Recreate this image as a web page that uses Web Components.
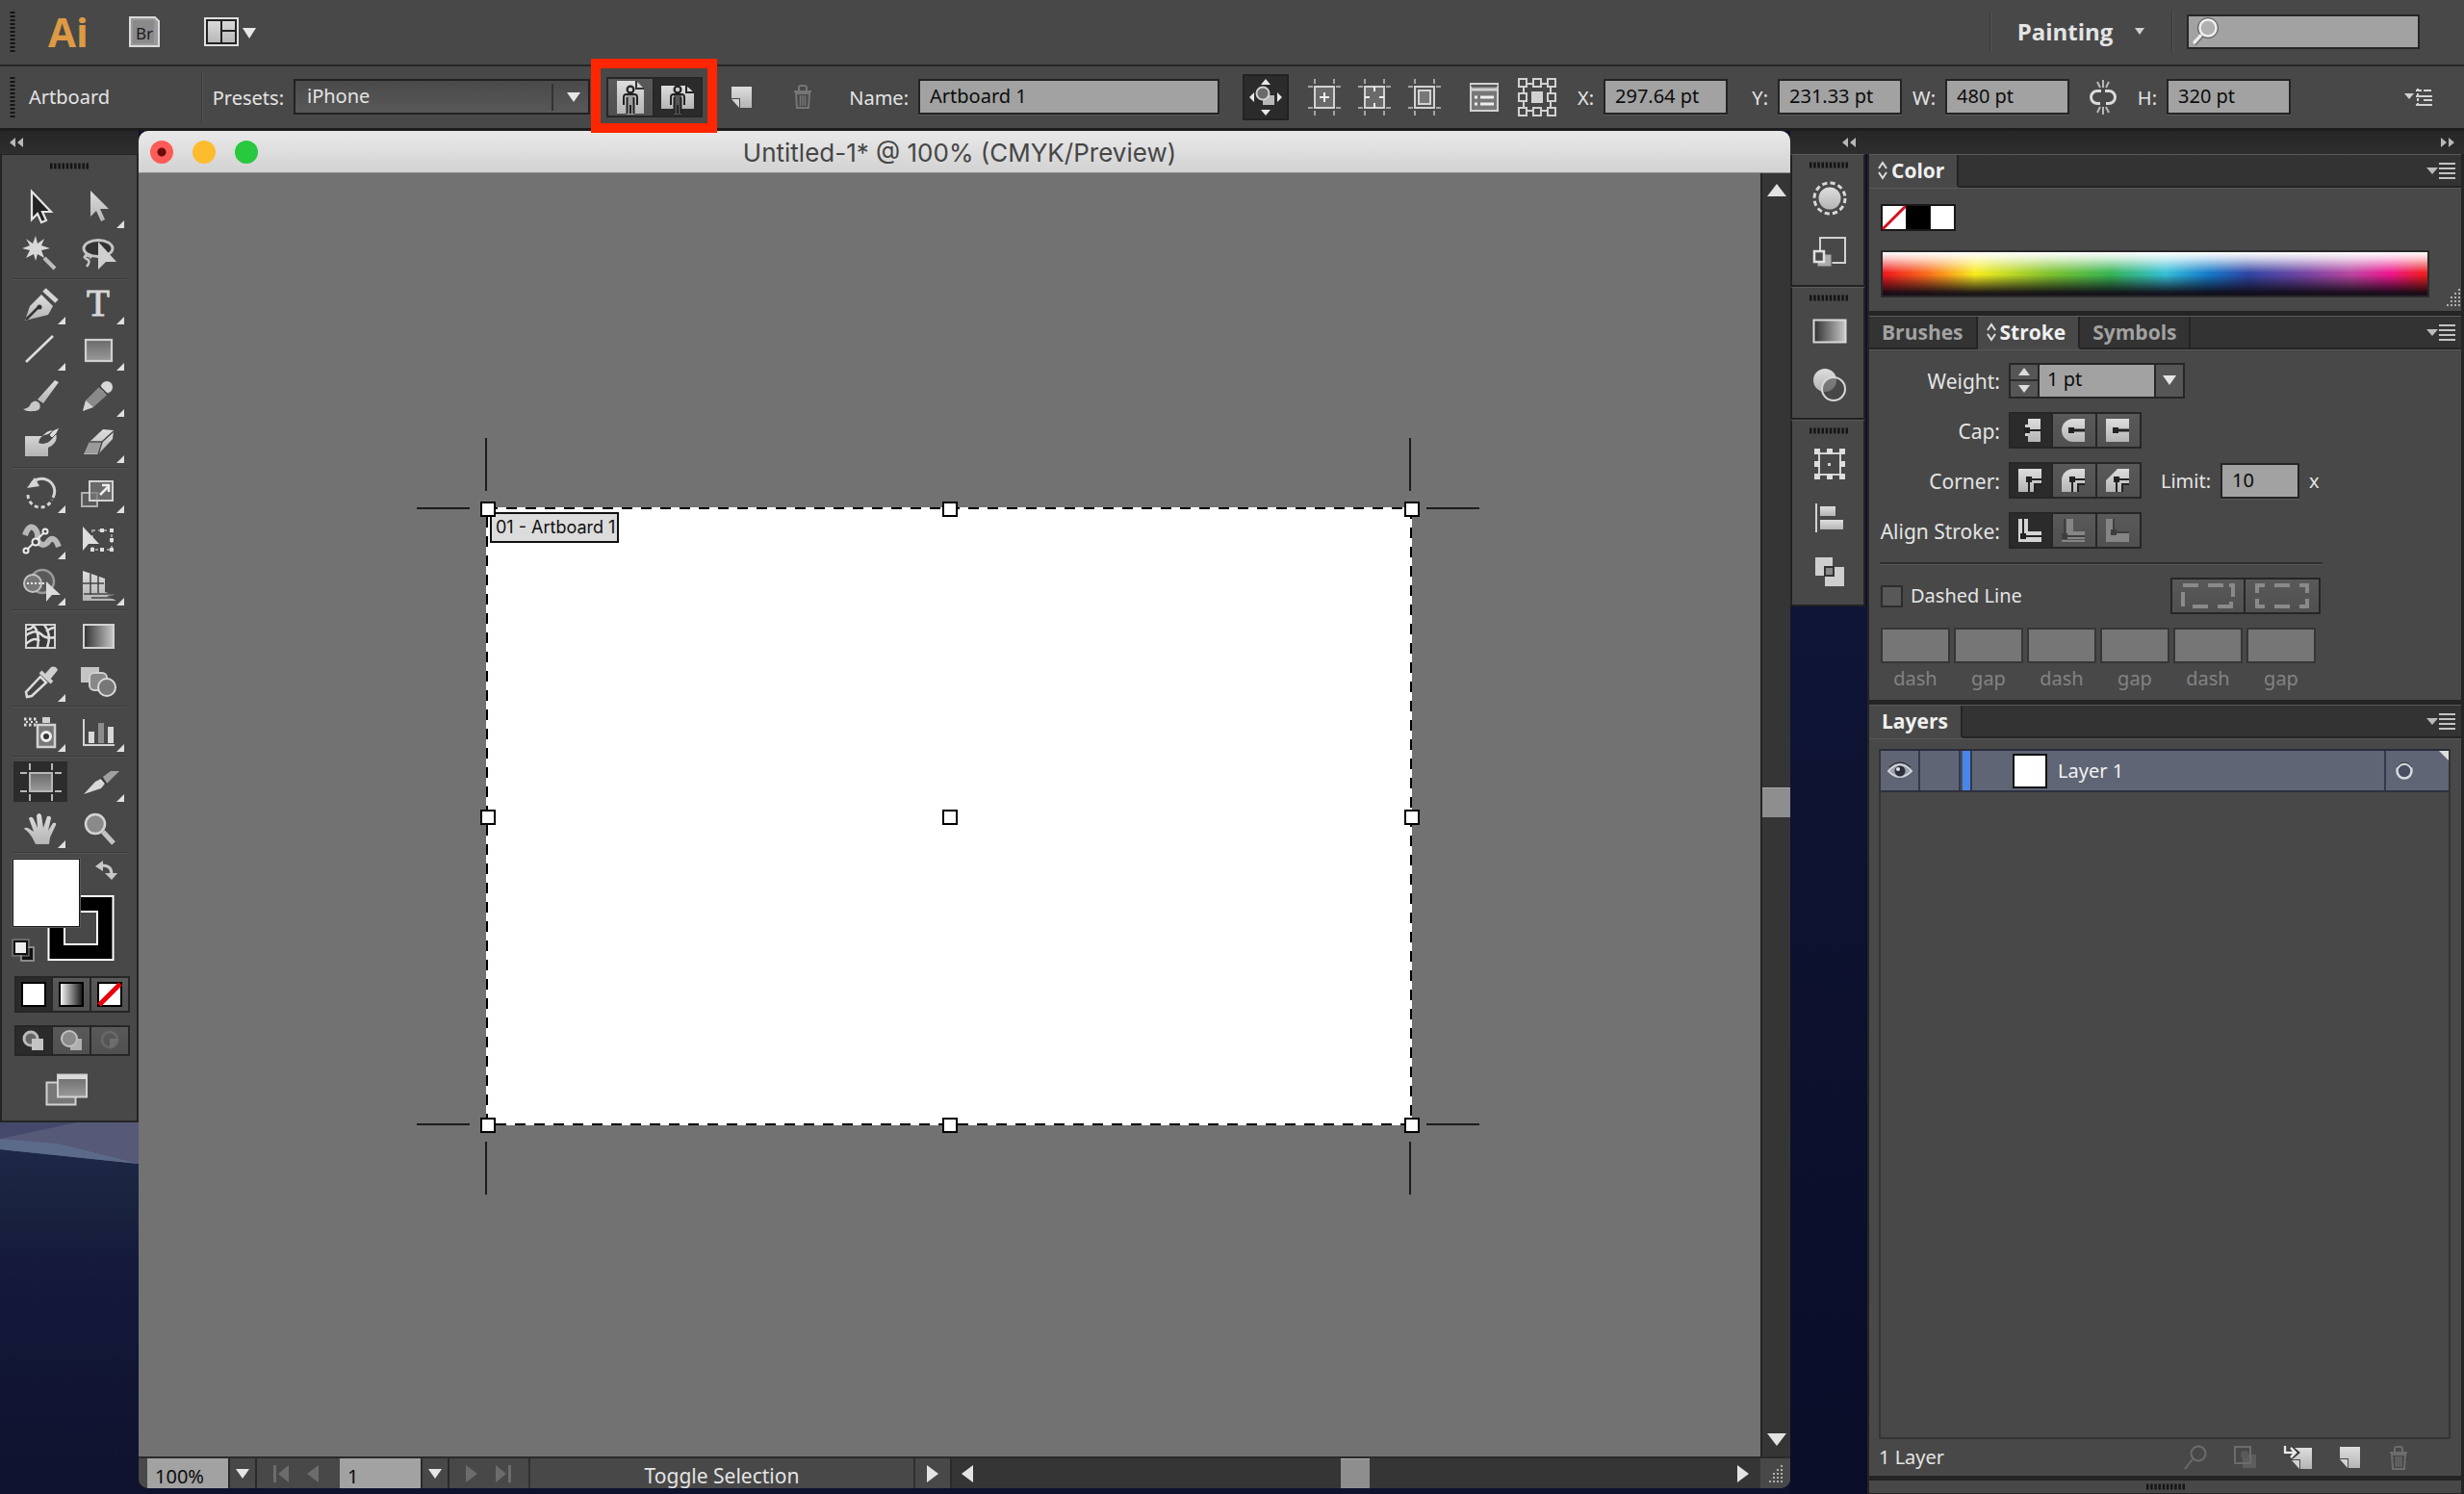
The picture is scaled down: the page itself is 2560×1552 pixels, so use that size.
<!DOCTYPE html>
<html lang="en">
<head>
<meta charset="utf-8">
<title>Untitled-1* @ 100% (CMYK/Preview)</title>
<style>
html,body{margin:0;height:100%;background:#0e122c}
body{font-family:"Noto Sans","Open Sans",sans-serif;font-size:20px;line-height:28px;color:#e4e4e4;overflow:hidden}
</style>
</head>
<body>
<ai-app></ai-app>
<script>
const BASE = `*{box-sizing:border-box}
button,input,select{font:inherit;color:inherit;margin:0;padding:0;border:0;border-radius:0;background:none;outline:0}
button{display:flex;align-items:center;justify-content:center}
svg{display:block}`;

function define(name, css, html) {
  customElements.define(name, class extends HTMLElement {
    connectedCallback() {
      if (this.shadowRoot) return;
      const root = this.attachShadow({ mode: 'open' });
      const t = document.createElement('template');
      t.innerHTML = `<style>${BASE}${css}</style>` + (typeof html === 'function' ? html(this) : html);
      root.append(t.content.cloneNode(true));
    }
  });
}

const L = '#d2d2d2';
const DEFS = `<defs>
<linearGradient id="g" x1="0" y1="0" x2="0" y2="1"><stop offset="0" stop-color="#dedede"/><stop offset="1" stop-color="#b4b4b4"/></linearGradient>
<linearGradient id="d" x1="0" y1="0" x2="0" y2="1"><stop offset="0" stop-color="#6a6a6a"/><stop offset="1" stop-color="#9a9a9a"/></linearGradient>
<linearGradient id="h" x1="0" y1="0" x2="1" y2="0"><stop offset="0" stop-color="#303030"/><stop offset="1" stop-color="#c8c8c8"/></linearGradient>
<linearGradient id="w" x1="0" y1="0" x2="1" y2="0"><stop offset="0" stop-color="#fff"/><stop offset="1" stop-color="#111"/></linearGradient></defs>`;

const person = (x, y, c) => `<g transform="translate(${x} ${y})"><path d="M5 11h8v20H5z" fill="${c}"/><path d="M2 21v-8q0-3 3-3h8q3 0 3 3v8M5.500 13v17M12.500 13v17M9 21v9" fill="none" stroke="#222" stroke-width="2"/><circle cx="9" cy="5" r="3.400" fill="#ccc" stroke="#222" stroke-width="2.200"/></g>`;
const marks = `<path d="M0 8h5M29 8h5M0 30h5M29 30h5M7 0v5M27 0v5M7 33v5M27 33v5" stroke="#a4a4a4" stroke-width="2"/>`;
const trash = `<path d="M3 7h18M8 6V3q0-2 2-2h4q2 0 2 2v3" fill="none" stroke="currentColor" stroke-width="2"/><path d="M5 9h14l-1 15H6z" fill="none" stroke="currentColor" stroke-width="2"/><path d="M9.500 11v11M12 11v11M14.500 11v11" stroke="currentColor" stroke-width="1.500"/>`;
const newpage = `<path d="M0 0h21v22H9V12H0z" fill="url(#g)"/><path d="M0 13l8 9V13z" fill="${L}"/>`;

const ICONS = {
  bridge: [32, 32, `<path d="M1 1h26l4 4v26H1z" fill="#9a9a9a" stroke="#dadada" stroke-width="2"/><path d="M4 4h22v24H4z" fill="#8a8a8a"/><text x="16" y="24" text-anchor="middle" font-family="Noto Sans" font-size="17" fill="#1c1c1c">Br</text>`],
  arrange: [54, 32, `<rect x="1" y="2" width="34" height="28" fill="url(#g)" stroke="#e0e0e0" stroke-width="2"/><path d="M3 4h30v24H3zM18 4v24M18 15h15" fill="none" stroke="#222" stroke-width="2"/><path d="M40 12h14l-7 11z" fill="#e8e8e8"/>`],
  down: [14, 10, `<path d="M0 0h14L7 10z" fill="#e6e6e6"/>`],
  downS: [12, 8, `<path d="M1 0h10L6 7z" fill="#d0d0d0"/>`],
  up: [20, 13, `<path d="M0 13h20L10 0z" fill="#e2e2e2"/>`],
  downL: [20, 14, `<path d="M0 0h20L10 13z" fill="#e2e2e2"/>`],
  right: [12, 18, `<path d="M0 0v18L12 9z" fill="currentColor"/>`],
  left: [12, 18, `<path d="M12 0v18L0 9z" fill="currentColor"/>`],
  first: [18, 18, `<path d="M0 0h3v18H0zM16 0v18L5 9z" fill="currentColor"/>`],
  last: [18, 18, `<path d="M15 0h3v18h-3zM2 0v18l11-9z" fill="currentColor"/>`],
  stepUp: [12, 8, `<path d="M0 8h12L6 0z" fill="#dcdcdc"/>`],
  stepDown: [12, 8, `<path d="M0 0h12L6 8z" fill="#dcdcdc"/>`],
  collapse: [14, 10, `<path d="M6 0v10L0 5zM14 0v10L8 5z" fill="#b8b8b8"/>`],
  expand: [14, 10, `<path d="M0 0v10l6-5zM8 0v10l6-5z" fill="#b8b8b8"/>`],
  search: [28, 30, `<circle cx="17" cy="11" r="8.500" fill="#b0b0b0" stroke="#eee" stroke-width="2.500"/><circle cx="17" cy="11" r="10.500" fill="none" stroke="#555"/><path d="M10 18L2 27" stroke="#eee" stroke-width="3"/><path d="M12 20L4 29" stroke="#555"/>`],
  portrait: [32, 40, `<path d="M2 3h20l8 8v26H2z" fill="url(#g)"/><path d="M22 3v8h8" fill="none" stroke="#333" stroke-width="2"/>` + person(7, 7, '#9c9c9c')],
  landscape: [36, 38, `<path d="M1 7h26l8 7v17H1z" fill="url(#g)"/><path d="M27 7v7h8" fill="none" stroke="#222" stroke-width="2"/>` + person(9, 6, '#555')],
  newpage: [22, 22, newpage],
  trash: [24, 25, trash],
  move: [34, 38, `<path d="M17 0l5 6H12zM17 38l5-6H12zM0 19l5-5v10zM34 19l-5-5v10z" fill="#e8e8e8"/><rect x="14" y="17" width="12" height="10" fill="#b8b8b8"/><circle cx="14" cy="15" r="6.500" fill="#6a6a6a" stroke="${L}" stroke-width="2"/>`],
  abCenter: [34, 38, marks + `<rect x="7" y="8" width="20" height="22" fill="#6a6a6a" stroke="${L}" stroke-width="2"/><path d="M17 14v10M12 19h10" stroke="#eee" stroke-width="2"/>`],
  abCross: [34, 38, marks + `<rect x="7" y="8" width="20" height="22" fill="#6a6a6a" stroke="${L}" stroke-width="2"/><path d="M17 8v5M17 25v5M7 19h5M22 19h5" stroke="#eee" stroke-width="2"/>`],
  abSafe: [34, 38, marks + `<rect x="7" y="8" width="20" height="22" fill="#555" stroke="${L}" stroke-width="2"/><rect x="11" y="12" width="12" height="14" fill="#777" stroke="${L}" stroke-width="2"/>`],
  options: [30, 30, `<rect x="1" y="1" width="28" height="28" fill="#777" stroke="${L}" stroke-width="2"/><path d="M1 3h28" stroke="#333" stroke-width="1"/><path d="M1 7h28" stroke="${L}" stroke-width="3"/><path d="M5 15h3M5 22h3M11 15h14M11 22h14" stroke="#eee" stroke-width="3"/>`],
  refpoint: [40, 40, `<path d="M6 6h28v28H6z" fill="none" stroke="${L}" stroke-width="2"/>` + [5, 20, 35].map(y => [5, 20, 35].map(x => x == 20 && y == 20 ? `<rect x="14" y="14" width="12" height="12" fill="${L}"/>` : `<rect x="${x - 4}" y="${y - 4}" width="8" height="8" fill="#484848" stroke="${L}" stroke-width="2"/>`).join('')).join('')],
  link: [30, 36, `<path d="M13 11.500H9a6.500 6.500 0 000 13h3M17 11.500h4a6.500 6.500 0 010 13h-3" fill="none" stroke="#dadada" stroke-width="3"/><path d="M15 0v8M9 2l3 6M21 2l-3 6M15 36v-8M9 34l3-6M21 34l-3-6" stroke="#b8b8b8" stroke-width="2"/>`],
  ctlMenu: [30, 20, `<path d="M0 6h10l-5 6z" fill="${L}"/><path d="M14 1v18" stroke="${L}" stroke-width="2" stroke-dasharray="3 2"/><path d="M12 3h6M20 3h8M12 9h17M20 13h9M12 18h17" stroke="${L}" stroke-width="2"/>`],
  menu: [30, 18, `<path d="M0 6h12l-6 7z" fill="#bbb"/><path d="M13 2h17M13 7h17M13 12h17M13 17h17" stroke="#c4c4c4" stroke-width="2"/>`],
  sort: [12, 20, `<path d="M2 8l4-6 4 6M2 12l4 6 4-6" fill="none" stroke="#ddd" stroke-width="2"/>`],
  grip: [40, 7, `<path d="M0 3.500h40" stroke="#151515" stroke-width="6" stroke-dasharray="2.500 1.667"/>`],
  vgrip: [6, 42, `<path d="M3 0v42" stroke="#151515" stroke-width="5" stroke-dasharray="2 2"/>`],
  sizer: [16, 20, `<path d="M14 1v2M14 5v2M10 5v2M14 9v2M10 9v2M6 9v2M14 13v2M10 13v2M6 13v2M2 17v2M6 17v2M10 17v2M14 17v2" stroke="#b0b0b0" stroke-width="2"/>`],
  appearance: [36, 36, `<circle cx="18" cy="18" r="16" fill="none" stroke="#d8d8d8" stroke-width="3" stroke-dasharray="5.200 3.180"/><circle cx="18" cy="18" r="11.500" fill="url(#g)"/>`],
  graphicStyles: [36, 34, `<rect x="8" y="2" width="26" height="26" fill="#484848" stroke="${L}" stroke-width="2"/><rect x="5" y="19" width="15" height="13" fill="#aaa" stroke="#484848"/><rect x="2" y="16" width="10" height="11" fill="#484848" stroke="#e0e0e0" stroke-width="2.500"/>`],
  gradientP: [36, 26, `<rect x="1.500" y="1.500" width="33" height="23" fill="url(#h)" stroke="#dadada" stroke-width="2"/>`],
  transparency: [36, 36, `<circle cx="13" cy="13" r="12" fill="url(#g)"/><circle cx="22" cy="22" r="12" fill="#484848" fill-opacity=".6" stroke="#d8d8d8" stroke-width="2"/>`],
  transformP: [34, 34, `<rect x="6" y="6" width="22" height="22" fill="none" stroke="${L}" stroke-width="2"/><rect x="15" y="16" width="3" height="3" fill="${L}"/>` + [4, 17, 30].map(y => [4, 17, 30].map(x => x == 17 && y == 17 ? '' : `<rect x="${x - 3}" y="${y - 3}" width="6" height="6" fill="#dedede"/>`).join('')).join('')],
  alignP: [30, 30, `<path d="M1 0v30" stroke="${L}" stroke-width="2"/><rect x="5" y="3" width="16" height="10" fill="url(#g)"/><rect x="5" y="17" width="24" height="10" fill="url(#g)"/>`],
  pathfinder: [32, 32, `<rect x="1" y="1" width="18" height="19" fill="#cfcfcf"/><rect x="11" y="11" width="20" height="20" fill="#cfcfcf"/><rect x="11" y="11" width="9" height="9" fill="#888" stroke="#333" stroke-width="2"/>`],
  capButt: [30, 26, `<path d="M12 1h13v24H12z" fill="url(#g)"/><path d="M26 13H10" stroke="#222" stroke-width="2"/><path d="M9 7h3v12H9z" fill="${L}"/><path d="M8 10h6v6H8z" fill="#222"/>`],
  capRound: [30, 26, `<path d="M26 1H14a12 12 0 000 24h12z" fill="url(#g)"/><path d="M26 13H13" stroke="#222" stroke-width="3"/><path d="M9 10h6v6H9z" fill="#222"/>`],
  capSquare: [30, 26, `<path d="M2 1h24v24H2z" fill="url(#g)"/><path d="M26 13H13" stroke="#222" stroke-width="3"/><path d="M9 10h6v6H9z" fill="#222"/>`],
  joinMiter: [30, 26, `<path d="M2 1h24v16h-6v8H2z" fill="url(#g)"/><path d="M26 12H13v13M26 17h-7v8" fill="none" stroke="#222" stroke-width="2"/><path d="M10 9h6v6h-6z" fill="#222"/>`],
  joinRound: [30, 26, `<path d="M26 1H14A12 12 0 002 13v12h18v-8h6z" fill="url(#g)"/><path d="M26 12H13v13M26 17h-7v8" fill="none" stroke="#222" stroke-width="2"/><path d="M10 9h6v6h-6z" fill="#222"/>`],
  joinBevel: [30, 26, `<path d="M26 1H14L2 13v12h18v-8h6z" fill="url(#g)"/><path d="M26 12H13v13M26 17h-7v8" fill="none" stroke="#222" stroke-width="2"/><path d="M10 9h6v6h-6z" fill="#222"/>`],
  alCenter: [30, 26, `<path d="M2 1h10v13h14v11H2z" fill="#d4d4d4"/><path d="M7 1v18h19" fill="none" stroke="#222" stroke-width="2"/><path d="M4 16h6v6H4z" fill="#222"/>`],
  alInside: [30, 26, `<path d="M7 1h7v13h12v8H7z" fill="#858585"/><path d="M5 1v18h21" fill="none" stroke="#3e3e3e" stroke-width="2"/><path d="M2 16h6v6H2z" fill="#3e3e3e"/><path d="M2 23h24v2H2z" fill="#858585"/>`],
  alOutside: [30, 26, `<path d="M2 1h8v15h16v9H2z" fill="#858585"/><path d="M10 1v14h16" fill="none" stroke="#3e3e3e" stroke-width="2"/><path d="M7 12h6v6H7z" fill="#3e3e3e"/>`],
  dashKeep: [56, 28, `<path d="M2 3h16M28 3h16M50 3h4v12M2 10v15M12 25h16M38 25h14v-5" fill="none" stroke="#8a8a8a" stroke-width="4"/>`],
  dashFit: [56, 28, `<path d="M2 11V3h8M20 3h16M46 3h8v8M2 17v8h8M20 25h16M46 25h8v-8" fill="none" stroke="#8a8a8a" stroke-width="4"/>`],
  eye: [26, 22, `<path d="M1 11Q13-3 25 11Q13 23 1 11z" fill="#9aa0ac" stroke="#cfd2da" stroke-width="2"/><circle cx="13" cy="11" r="5.500" fill="#2b2f3a"/><circle cx="11" cy="9" r="2" fill="#dfe3ea"/><path d="M2 7Q13-3 24 7" fill="none" stroke="#222" stroke-width="1"/>`],
  target: [20, 22, `<circle cx="10" cy="11" r="7.500" fill="#4a5060" stroke="#d8dbe2" stroke-width="2.500"/><path d="M2 7Q10-3 18 7" fill="none" stroke="#333" stroke-width="1"/>`],
  find: [26, 26, `<circle cx="16" cy="9" r="7.500" fill="none" stroke="currentColor" stroke-width="2"/><path d="M10 15L2 25" stroke="currentColor" stroke-width="2"/>`],
  mask: [24, 24, `<path d="M1 1h16v17H1z" fill="none" stroke="currentColor" stroke-width="2"/><path d="M9 9h14v14H9z" fill="currentColor" fill-opacity=".6"/><circle cx="11" cy="9" r="4" fill="#5a5a5a"/>`],
  sublayer: [32, 24, `<g transform="translate(9 2)">${newpage}</g><path d="M1 0v7h9M8 2l6 5-6 5" fill="none" stroke="#333" stroke-width="5"/><path d="M2 0v7h9M8 2l5 5-5 5" fill="none" stroke="#e8e8e8" stroke-width="2.500"/>`],
  screen: [44, 34, `<rect x="1.500" y="9.500" width="30" height="23" fill="#777" stroke="${L}" stroke-width="2"/><rect x="13" y="1.500" width="30" height="23" fill="url(#d)" stroke="${L}" stroke-width="2"/><path d="M13 4h30" stroke="#dadada" stroke-width="4"/>`],
  fillWhite: [26, 26, `<rect x="1" y="1" width="24" height="24" fill="#fff" stroke="#000" stroke-width="2"/>`],
  fillGrad: [26, 26, `<rect x="1" y="1" width="24" height="24" fill="url(#w)" stroke="#000" stroke-width="2"/>`],
  fillNone: [26, 26, `<rect x="1" y="1" width="24" height="24" fill="#fff" stroke="#000" stroke-width="2"/><path d="M2 24L24 2" stroke="#e8000b" stroke-width="5"/>`],
  drawNormal: [24, 22, `<circle cx="9" cy="9" r="7" fill="#666" stroke="#bbb" stroke-width="3"/><rect x="10" y="9" width="12" height="12" fill="#c4c4c4"/>`],
  drawBehind: [24, 22, `<rect x="11" y="9" width="12" height="12" fill="#b0b0b0"/><circle cx="10" cy="9" r="8" fill="#8a8a8a" stroke="#c0c0c0" stroke-width="2"/>`],
  drawInside: [24, 22, `<circle cx="12" cy="10" r="8" fill="none" stroke="#666" stroke-width="3"/><path d="M12 9h9l-6 9h-3z" fill="#6e6e6e"/>`],
  swatches: [78, 28, `<rect width="78" height="28" fill="#181818"/><rect x="2" y="2" width="24" height="24" fill="#fff"/><path d="M2 26L26 2" stroke="#d2101f" stroke-width="3"/><rect x="26" y="2" width="25" height="24" fill="#000"/><rect x="52" y="2" width="24" height="24" fill="#fff"/>`],
};

const TOOLS = {
  selection: [0, `<path d="M21 7v29l6-6 4 9 5-2-4-9h9z" fill="#222" stroke="#e4e4e4" stroke-width="2.200"/>`],
  direct: [1, `<path d="M21 6v27l6-6 5 11 4-2-5-11h9z" fill="url(#g)"/>`],
  wand: [0, `<path d="M25 5l2 8 7-5-3 7 9 3-9 2 3 8-7-4-2 7-2-7-8 4 4-8-8-2 8-3-4-7 7 5z" fill="#d8d8d8"/><path d="M34 28l11 11" stroke="#bdbdbd" stroke-width="4"/>`],
  lasso: [0, `<ellipse cx="29" cy="18" rx="15" ry="8.500" fill="#333" stroke="#c4c4c4" stroke-width="3"/><path d="M17 24q-4 4 0 5q5 2 0 8M14 28q3-5 8 0" fill="none" stroke="#c4c4c4" stroke-width="2.500"/><path d="M29 11v29l8-8h11z" fill="#cfcfcf"/>`],
  pen: [1, `<path d="M14 41l5-15 12-12 12 12-5 9z" fill="url(#g)"/><path d="M15 40l13-13" stroke="#333" stroke-width="2.500"/><circle cx="29" cy="27" r="2.500" fill="#333"/><path d="M34 9l13 12" stroke="#d4d4d4" stroke-width="5"/>`],
  type: [1, `<text x="29" y="36" text-anchor="middle" font-family="Liberation Serif" font-size="39" fill="#d8d8d8" stroke="#d8d8d8">T</text>`],
  line: [1, `<path d="M15 36L43 9" stroke="#dedede" stroke-width="2.500"/>`],
  rect: [1, `<rect x="16" y="13" width="27" height="22" fill="url(#d)" stroke="#d0d0d0" stroke-width="2.200"/>`],
  brush: [0, `<path d="M12 37q7-1 8-6 5-5 9 0 3 8-7 8-6 1-10-2z" fill="#c8c8c8"/><path d="M27 27L45 7l4 2-16 22z" fill="url(#g)"/>`],
  pencil: [1, `<path d="M13 39l3-11L35 9l9 8-20 18z" fill="#8a8a8a"/><path d="M13 39l3-11 8 7z" fill="#d4d4d4"/><circle cx="38" cy="14" r="6" fill="#d8d8d8"/><path d="M30 13l9 9" stroke="#333" stroke-width="1.500"/>`],
  blob: [0, `<path d="M14 17h18q6-7 12-6l-6 4q-9 1-10 9 8 3 14-4l4-6q3 10-8 15v9H14z" fill="url(#g)"/><path d="M39 16l4-5 7-3-3 6-5 5z" fill="#dedede" stroke="#444"/>`],
  eraser: [1, `<path d="M14 36l6-13 14-13 11 1-1 9-15 16z" fill="url(#g)"/><path d="M20 23h13l-4 13M33 23l12-11" fill="none" stroke="#444" stroke-width="1.500"/><path d="M15 35l5-11h12l-4 11z" fill="#9a9a9a"/>`],
  rotate: [1, `<path d="M20 16a13 13 0 0123 13" fill="none" stroke="#d4d4d4" stroke-width="3"/><path d="M16 19l8-11 5 9z" fill="#d4d4d4"/><path d="M17 26a13 13 0 0025 5" fill="none" stroke="#d4d4d4" stroke-width="3" stroke-dasharray="4 3"/>`],
  scale: [1, `<rect x="12" y="24" width="16" height="14" fill="#5a5a5a" stroke="#b0b0b0" stroke-width="2"/><rect x="20" y="12" width="24" height="20" fill="#777" fill-opacity=".7" stroke="${L}" stroke-width="2"/><path d="M31 26l8-8M33 16h7v7" fill="none" stroke="#eee" stroke-width="2.500"/>`],
  warp: [1, `<path d="M14 20q4-12 10-7 4 4 3 12 4 8 10 3 7-10 12 4" fill="none" stroke="#b8b8b8" stroke-width="6"/><path d="M15 36L35 16" stroke="#e8e8e8" stroke-width="2"/><g fill="#444" stroke="#eee" stroke-width="2"><circle cx="15" cy="36" r="2.500"/><circle cx="35" cy="16" r="2.500"/><circle cx="25" cy="27" r="3.500"/></g>`],
  free: [0, `<rect x="23" y="15" width="20" height="20" fill="none" stroke="#9a9a9a" stroke-width="2" stroke-dasharray="3 3"/><g fill="#dedede"><path d="M31 13h4v4h-4zM41 13h4v4h-4zM41 23h4v4h-4zM41 33h4v4h-4zM31 33h4v4h-4zM21 33h4v4h-4z"/><path d="M13 11v25l6-7h11z"/></g>`],
  builder: [1, `<circle cx="32" cy="20" r="12" fill="#5a5a5a" stroke="#9a9a9a" stroke-width="2.500"/><circle cx="22" cy="22" r="9" fill="#777" stroke="#c4c4c4" stroke-width="2"/><path d="M16 22h20" stroke="#eee" stroke-width="2" stroke-dasharray="2 2"/><path d="M36 20v21l6-7h9z" fill="#dcdcdc"/>`],
  perspective: [1, `<path d="M13 9l23 8v14l10 3-8 1 10 5H13z" fill="url(#g)"/><path d="M21 12v22M29 14v18M13 22h22M14 33h30M22 37h26" stroke="#444" stroke-width="1.500"/>`],
  mesh: [0, `<rect x="15" y="13" width="30" height="24" fill="#3a3a3a" stroke="${L}" stroke-width="2"/><path d="M15 24q10-7 16-1 5 5 14 3M22 13q8 8 5 24M34 13q8 10 3 24M15 33q9-8 14-3M15 18q5 0 8-4M36 20q5-4 9-4" fill="none" stroke="#dedede" stroke-width="2.500"/>`],
  gradient: [0, `<rect x="14" y="13" width="31" height="24" fill="url(#h)" stroke="${L}" stroke-width="2"/>`],
  dropper: [1, `<path d="M16 40l-1-5 15-16 6 6-15 14z" fill="#444" stroke="#dcdcdc" stroke-width="2.500"/><path d="M30 14l12 11" stroke="#d0d0d0" stroke-width="4"/><path d="M34 17l7-8q5-2 7 3l-8 10z" fill="#d0d0d0"/>`],
  blend: [0, `<path d="M11 9h19v16H11z" fill="#c4c4c4"/><rect x="20" y="15" width="18" height="18" rx="5" fill="#888" stroke="#d0d0d0" stroke-width="2"/><circle cx="38" cy="30" r="9" fill="#777" stroke="#dadada" stroke-width="2"/>`],
  spray: [1, `<path d="M13 11h14M13 17h14" stroke="#ddd" stroke-width="3" stroke-dasharray="2.500 2.500"/><path d="M15 14h12" stroke="#ddd" stroke-width="2" stroke-dasharray="2 3"/><path d="M32 9h8v6h-8z" fill="#d0d0d0"/><rect x="27" y="17" width="18" height="23" fill="#777" stroke="${L}" stroke-width="2.500"/><circle cx="36" cy="29" r="4.500" fill="#333" stroke="#eee" stroke-width="3"/>`],
  graph: [1, `<path d="M14 11v27h32" fill="none" stroke="${L}" stroke-width="2"/><path d="M19 24h6v12h-6zM39 19h6v17h-6z" fill="#d8d8d8"/><path d="M29 15h6v21h-6z" fill="#8c8c8c"/>`],
  artboard: [0, `<rect x="2" y="3" width="56" height="42" fill="#2c2c2c"/><rect x="19" y="15" width="23" height="19" fill="url(#d)" stroke="#b8b8b8" stroke-width="2"/><path d="M9 15h7M45 15h7M9 34h7M45 34h7M19 5v7M42 5v7M19 37v7M42 37v7" stroke="#b8b8b8" stroke-width="2"/>`],
  slice: [1, `<path d="M14 37l12-13 6-3 4 5-4 5z" fill="#d8d8d8"/><path d="M34 19l8-6h9L38 26z" fill="#a0a0a0"/><path d="M32 20l6 7" stroke="#333" stroke-width="1.500"/>`],
  hand: [1, `<path d="M25 41l-3-6q-4-7-9-10 2-3 7 1l3 2-5-14q3-3 5 1l4 9-1-13q3-4 5 0l2 13 4-12q4-1 4 2l-3 13 5-8q4-1 3 2l-6 13-1 7z" fill="url(#g)"/>`],
  zoom: [0, `<path d="M34 28l11 12" stroke="#c4c4c4" stroke-width="5"/><circle cx="26" cy="20" r="10" fill="#8a8a8a" stroke="#d4d4d4" stroke-width="2.500"/>`],
};

define('ui-icon', ':host{display:inline-flex;flex:none}', el => {
  const [w, h, m] = ICONS[el.getAttribute('name')];
  return `<svg width="${w}" height="${h}" viewBox="0 0 ${w} ${h}" aria-hidden="true">${DEFS}${m}</svg>`;
});

define('ui-tool', ':host{display:block}button{width:60px;height:48px}', el => {
  const n = el.getAttribute('name'), [flyout, m] = TOOLS[n];
  return `<button aria-label="${n}"><svg width="60" height="48" viewBox="0 0 60 48">${DEFS}${m}${flyout ? '<path d="M56 37v8h-8z" fill="#e0e0e0"/>' : ''}</svg></button>`;
});

define('ui-field', `:host{display:inline-flex;align-items:center;gap:10px}
label{width:var(--lw,auto);text-align:right;white-space:nowrap;padding-top:2px}
input{width:var(--w,128px);height:37px;padding:0 10px 2px;border:2px solid #242424;background:#a2a2a2;color:#0c0c0c;box-shadow:0 1px 0 #5c5c5c}`,
  el => `<label for="f">${el.getAttribute('label')}</label><input id="f" value="${el.getAttribute('value')}">`);

define('ui-select', `:host{display:inline-flex;align-items:center;gap:10px}
label{width:var(--lw,auto);text-align:right;padding-top:2px}
.box{display:grid;align-items:center;width:var(--w);height:37px;border:2px solid #222;background:linear-gradient(#4a4a4a,#585858)}
select,.arrow{grid-area:1/1}
select{appearance:none;width:100%;height:33px;padding:0 12px 2px}
.arrow{justify-self:end;display:flex;padding:0 8px 0 14px;border-left:2px solid #333;height:28px;align-items:center;pointer-events:none}`,
  el => `<label for="s">${el.getAttribute('label')}</label><span class="box"><select id="s"><option>${el.getAttribute('value')}</option></select><span class="arrow"><ui-icon name="down"></ui-icon></span></span>`);

define('ui-segments', `:host{display:inline-flex}
button{width:var(--bw,46px);height:var(--bh,38px);border:2px solid #262626;border-left-width:0;background:linear-gradient(#595959,#505050)}
style + button{border-left-width:2px}
button.on{background:#2b2b2b}`,
  el => el.getAttribute('icons').split(' ').map(n => {
    const on = n.startsWith('*'); n = n.replace('*', '');
    return `<button aria-label="${n}" ${on ? 'class="on"' : ''}><ui-icon name="${n}"></ui-icon></button>`;
  }).join(''));

define('app-bar', `:host{display:flex;align-items:center;height:69px;padding:0 46px 2px 10px;background:#484848;border-bottom:2px solid #262626}
.logo{font:700 42px/48px "Open Sans",sans-serif;color:#dd9a45;margin:0 42px 0 34px}
.gap{margin-left:46px}.fill{flex:1}
.sep{width:2px;height:42px;background:#363636;border-right:1px solid #555}
.ws{gap:22px;width:187px;font:700 24px/30px "Open Sans",sans-serif}
.search{display:flex;align-items:center;width:242px;height:36px;margin-left:14px;padding-left:3px;background:#a2a2a2;border:2px solid #262626}
input{flex:1;min-width:0;height:30px;color:#111}`,
  `<ui-icon name="vgrip"></ui-icon><span class="logo">Ai</span>
<button aria-label="Bridge"><ui-icon name="bridge"></ui-icon></button>
<button class="gap" aria-label="Arrange documents"><ui-icon name="arrange"></ui-icon></button>
<span class="fill"></span><span class="sep"></span>
<button class="ws">Painting<ui-icon name="downS"></ui-icon></button><span class="sep"></span>
<label class="search"><ui-icon name="search"></ui-icon><input type="search" aria-label="Search"></label>`);

define('control-bar', `:host{display:flex;align-items:center;height:67px;padding:0 32px 1px 10px;background:#484848;border-bottom:3px solid #1c1c1c}
.title{width:193px;padding-left:14px}
.sep{width:2px;height:52px;background:#363636;border-right:1px solid #555}
.orient{position:relative;display:flex;margin:0 30px 0 17px}
.callout{position:absolute;inset:-19px -15px -16px -16px;border:10px solid #ff2600;z-index:5;pointer-events:none}
.dim{color:#757575}.g18{margin-left:18px}.g20{margin-left:20px}.g24{margin-left:24px}.g30{margin-left:30px}.g40{margin-left:40px}
.on{width:48px;height:48px;background:#2b2b2b;border:2px solid #222}
.fill{flex:1}`,
  `<ui-icon name="vgrip"></ui-icon><span class="title">Artboard</span><span class="sep"></span>
<ui-select label="Presets:" value="iPhone" style="--lw:84px;--w:308px"></ui-select>
<span class="orient"><ui-segments icons="portrait *landscape" style="--bw:50px;--bh:42px"></ui-segments><span class="callout"></span></span>
<button aria-label="New artboard"><ui-icon name="newpage"></ui-icon></button>
<button class="dim g40" aria-label="Delete artboard"><ui-icon name="trash"></ui-icon></button>
<ui-field label="Name:" value="Artboard 1" style="--lw:98px;--w:313px"></ui-field>
<button class="on g24" aria-label="Move artwork with artboard"><ui-icon name="move"></ui-icon></button>
<button class="g20" aria-label="Show center mark"><ui-icon name="abCenter"></ui-icon></button>
<button class="g18" aria-label="Show cross hairs"><ui-icon name="abCross"></ui-icon></button>
<button class="g18" aria-label="Show video safe areas"><ui-icon name="abSafe"></ui-icon></button>
<button class="g30" aria-label="Artboard options"><ui-icon name="options"></ui-icon></button>
<button class="g20" aria-label="Reference point"><ui-icon name="refpoint"></ui-icon></button>
<ui-field label="X:" value="297.64 pt" style="--lw:39px;--w:129px"></ui-field>
<ui-field label="Y:" value="231.33 pt" style="--lw:42px;--w:129px"></ui-field>
<ui-field label="W:" value="480 pt" style="--lw:35px;--w:129px"></ui-field>
<button class="g20" aria-label="Link width and height"><ui-icon name="link"></ui-icon></button>
<ui-field label="H:" value="320 pt" style="--lw:41px;--w:129px"></ui-field>
<span class="fill"></span><button aria-label="Menu"><ui-icon name="ctlMenu"></ui-icon></button>`);

define('tool-box', `:host{display:flex;flex-direction:column;width:144px;flex:none;min-height:0}
.head{height:24px;background:linear-gradient(#262626,#2e2e2e);padding:0 10px;display:flex;align-items:center}
.body{background:#484848;border:solid #242424;border-width:1px 2px 2px;height:1006px;display:flex;flex-direction:column;flex:none}
.gr{display:flex;justify-content:center;padding:8px 0 16px}
.tools{display:grid;grid-template-columns:60px 60px;column-gap:1px;padding-left:10px}
hr{margin:1px 10px;height:2px;border:0;background:#3a3a3a;border-bottom:1px solid #525252}
.fs{height:126px}
.modes{padding:0 10px 12px 13px}
.scr{display:flex;justify-content:center;padding:4px 6px 0 0}
.wall{flex:1;min-height:0;width:144px}`,
  () => {
    const g = (...n) => `<div class="tools">${n.map(x => `<ui-tool name="${x}"></ui-tool>`).join('')}</div>`;
    return `<div class="head"><ui-icon name="collapse"></ui-icon></div><div class="body"><div class="gr"><ui-icon name="grip"></ui-icon></div>
${[g('selection', 'direct', 'wand', 'lasso'), g('pen', 'type', 'line', 'rect', 'brush', 'pencil', 'blob', 'eraser'), g('rotate', 'scale', 'warp', 'free', 'builder', 'perspective'), g('mesh', 'gradient', 'dropper', 'blend'), g('spray', 'graph'), g('artboard', 'slice', 'hand', 'zoom')].join('<hr>')}<hr>
<svg class="fs" width="140" height="126" viewBox="2 888 140 126"><rect x="50.500" y="931" width="67" height="66" fill="#000" stroke="#fff" stroke-width="2"/><rect x="67" y="947" width="34" height="34" fill="#484848" stroke="#fff" stroke-width="2"/><rect x="12" y="891" width="72" height="73" fill="#5a5a5a"/><rect x="13.500" y="892.500" width="69" height="70" fill="#fff" stroke="#1a1a1a"/><path d="M104 899q12-1 12 9" fill="none" stroke="#c8c8c8" stroke-width="3"/><path d="M99 900l8-6v11zM109 907h13l-6 7z" fill="#c8c8c8"/><rect x="22" y="984" width="13" height="14" fill="#111" stroke="#8a8a8a" stroke-width="2"/><rect x="15" y="978" width="13" height="13" fill="#eee" stroke="#111" stroke-width="2"/><rect x="13" y="976" width="17" height="17" fill="none" stroke="#8a8a8a"/></svg>
<div class="modes"><ui-segments icons="*fillWhite fillGrad fillNone" style="--bw:40px;--bh:38px"></ui-segments></div>
<div class="modes"><ui-segments icons="*drawNormal drawBehind drawInside" style="--bw:40px;--bh:32px"></ui-segments></div>
<div class="scr"><button aria-label="Screen mode"><ui-icon name="screen"></ui-icon></button></div></div>
<svg class="wall" viewBox="0 0 144 386" preserveAspectRatio="none"><defs><linearGradient id="n" x1="0" y1="0" x2="0" y2="1"><stop offset="0" stop-color="#1f2a4a"/><stop offset=".2" stop-color="#1a2440"/><stop offset=".4" stop-color="#15193a"/><stop offset="1" stop-color="#0e122e"/></linearGradient></defs><rect width="144" height="386" fill="url(#n)"/><path d="M0 0h144v43L0 28z" fill="#565a78"/><path d="M0 17L80 0H0z" fill="#44486a"/><path d="M0 17L60 22 144 43 0 28z" fill="#5c6a8a"/></svg>`;
  });

define('doc-window', `:host{display:flex;flex-direction:column;flex:1;min-width:0;margin-bottom:6px;background:#484848;border-radius:10px;overflow:hidden}
header{display:grid;grid-template-columns:1fr auto 1fr;align-items:center;height:44px;padding:0 12px;background:linear-gradient(#e9e9e9,#d2d2d2);border-bottom:1px solid #8a8a8a}
.lights{display:flex;gap:20px}
.lights button{width:24px;height:24px;border-radius:50%;background:#28c83f}
.lights button:nth-child(1){background:radial-gradient(circle,#6b0a0a 0 4px,#fc5b57 5px)}
.lights button:nth-child(2){background:#fdbc2e}
h1{margin:0;font:400 26px/32px Inter,sans-serif;color:#464646;padding:2px 10px 0 0}
.mid{flex:1;display:flex;min-height:0}
.canvas{flex:1;display:flex;align-items:center;justify-content:center;background:#727272;min-width:0;padding:3px 1px 0 0}
.vs{width:31px;background:#353535;border-left:2px solid #242424;display:flex;flex-direction:column;align-items:center;padding:11px 0 10px}
.before{flex:24}.after{flex:25}
.thumb{width:29px;height:31px;background:#8e8e8e;border-top:1px solid #aaa}
footer{display:flex;height:33px;border-top:2px solid #2a2a2a;background:#484848;padding-left:9px}
footer input{width:84px;background:#a2a2a2;color:#0c0c0c;padding:5px 8px 0;height:31px}
footer>button{color:#e4e4e4}
.dd{width:30px;border:solid #2a2a2a;border-width:0 2px}
footer>.dim{color:#6c6c6c;margin-left:17px}
.num{margin-left:22px}
.status{margin-left:18px;width:402px;border:solid #303030;border-width:0 2px;text-align:center;padding-top:5px;font-size:21px;line-height:26px}
.play{width:38px;border-right:2px solid #2a2a2a}
.hs{flex:1;display:flex;align-items:center;justify-content:space-between;background:#353535;padding:0 12px 0 10px}
.hs .thumb{width:30px}
.corner{width:31px;display:flex;align-items:center;justify-content:center}`,
  `<header><span class="lights"><button aria-label="Close"></button><button aria-label="Minimize"></button><button aria-label="Zoom"></button></span><h1>Untitled-1* @ 100% (CMYK/Preview)</h1></header>
<div class="mid"><div class="canvas"><art-board label="01 - Artboard 1"></art-board></div>
<div class="vs"><ui-icon name="up"></ui-icon><span class="before"></span><span class="thumb"></span><span class="after"></span><ui-icon name="downL"></ui-icon></div></div>
<footer><input aria-label="Zoom level" value="100%"><button class="dd" aria-label="Zoom menu"><ui-icon name="down"></ui-icon></button>
<button class="dim" aria-label="First"><ui-icon name="first"></ui-icon></button><button class="dim" aria-label="Previous"><ui-icon name="left"></ui-icon></button>
<input class="num" aria-label="Artboard number" value="1"><button class="dd" aria-label="Artboard menu"><ui-icon name="down"></ui-icon></button>
<button class="dim" aria-label="Next"><ui-icon name="right"></ui-icon></button><button class="dim" aria-label="Last"><ui-icon name="last"></ui-icon></button>
<span class="status">Toggle Selection</span><button class="play" aria-label="Status menu"><ui-icon name="right"></ui-icon></button>
<div class="hs"><ui-icon name="left"></ui-icon><span class="thumb"></span><ui-icon name="right"></ui-icon></div><span class="corner"><ui-icon name="sizer"></ui-icon></span></footer>`);

define('art-board', `:host{position:relative;display:block;width:960px;height:640px;background:#fff}
svg{position:absolute;left:-74px;top:-74px}
span{position:absolute;left:3px;top:4px;height:32px;padding:0 2px 0 4px;border:2px solid #111;background:#dcdcdc;color:#111;font:400 18px/28px Inter,sans-serif;white-space:nowrap}`,
  el => {
    const h = [0, 480, 960].flatMap(x => [0, 320, 640].map(y => `<rect x="${68 + x}" y="${68 + y}" width="14" height="14" fill="#fff" stroke="#000" stroke-width="2"/>`)).join('');
    return `<span>${el.getAttribute('label')}</span><svg width="1108" height="788" viewBox="0 0 1108 788"><path d="M73 1v55M1033 1v55M73 732v55M1033 732v55M1 74h55M1050 74h55M1 714h55M1050 714h55" stroke="#1c1c1c" stroke-width="2"/><rect x="74" y="74" width="960" height="640" fill="none" stroke="#fff" stroke-width="2"/><rect x="74" y="74" width="960" height="640" fill="none" stroke="#000" stroke-width="2" stroke-dasharray="11 9"/>${h}</svg>`;
  });

define('dock-strip', `:host{display:flex;flex-direction:column;width:80px;flex:none}
.head{height:24px;background:linear-gradient(#262626,#2e2e2e);display:flex;align-items:center;justify-content:flex-end;padding-right:12px}
.g{width:78px;height:138px;display:flex;flex-direction:column;align-items:center;background:#484848;border:solid #222;border-width:0 2px 2px;border-top:1px solid #5a5a5a}
.g.last{height:194px}
.g button{height:56px;width:60px}
.gr{display:flex;padding:7px 0 3px 2px}
.g button ui-icon{margin-left:4px}
.wall{flex:1;background:linear-gradient(#0f1535,#0d1230 30%,#0a0d28)}`,
  `<div class="head"><ui-icon name="collapse"></ui-icon></div>
<div class="g"><span class="gr"><ui-icon name="grip"></ui-icon></span><button aria-label="Appearance"><ui-icon name="appearance"></ui-icon></button><button aria-label="Graphic styles"><ui-icon name="graphicStyles"></ui-icon></button></div>
<div class="g"><span class="gr"><ui-icon name="grip"></ui-icon></span><button aria-label="Gradient"><ui-icon name="gradientP"></ui-icon></button><button aria-label="Transparency"><ui-icon name="transparency"></ui-icon></button></div>
<div class="g last"><span class="gr"><ui-icon name="grip"></ui-icon></span><button aria-label="Transform"><ui-icon name="transformP"></ui-icon></button><button aria-label="Align"><ui-icon name="alignP"></ui-icon></button><button aria-label="Pathfinder"><ui-icon name="pathfinder"></ui-icon></button></div><div class="wall"></div>`);

define('ui-panel', `:host{display:flex;flex-direction:column;background:#484848;border:solid #242424;border-width:0 3px 5px 2px}
nav{display:flex;height:35px;background:#333;border-top:1px solid #5a5a5a;flex:none}
nav button{gap:3px;padding:0 13px 1px;border:solid #242424;border-width:0 2px 2px 0;color:#a2a2a2;font:700 21px/28px "Open Sans","Noto Sans",sans-serif}
nav button.on{background:#484848;border-bottom-color:#484848;color:#f0f0f0}
nav button.s{padding-left:8px}
.rest{flex:1;border-bottom:2px solid #242424;display:flex;justify-content:flex-end;align-items:center;padding-right:6px}
.body{flex:1;min-height:0;display:flex;flex-direction:column;border-top:1px solid #585858}`,
  el => `<nav>${el.getAttribute('tabs').split(' ').map(t => {
    const on = t[0] === '*', s = t.endsWith('^'); t = t.replace(/[*^]/g, '');
    return `<button class="${on ? 'on' : ''} ${s ? 's' : ''}">${s ? '<ui-icon name="sort"></ui-icon>' : ''}${t}</button>`;
  }).join('')}<span class="rest"><ui-icon name="menu"></ui-icon></span></nav><div class="body"><slot></slot></div>`);

define('color-ramp', `:host{display:flex;flex-direction:column;height:127px;padding:16px 12px 0;gap:20px;align-items:flex-start}
.row{display:flex;align-self:stretch;gap:17px;align-items:flex-end}
.ramp{flex:1;height:49px;border:2px solid #2a2a2a;background:linear-gradient(#fff 0,rgba(255,255,255,.75) 15%,rgba(255,255,255,0) 48%,rgba(0,0,0,0) 52%,rgba(15,10,20,.9) 92%,#15101a),linear-gradient(90deg,#f0141e 0,#f96a1c 8%,#f8ec1e 17%,#7cc22e 31%,#35b455 42%,#35bfd8 52%,#1478c8 60%,#2f45a4 67%,#6a45a4 76%,#b846a0 86%,#ee1690 93%,#ee1c24 99%)}
.sz{margin:0 -12px -10px 0}`,
  `<ui-icon name="swatches"></ui-icon><div class="row"><div class="ramp" role="img" aria-label="Color spectrum"></div><ui-icon class="sz" name="sizer"></ui-icon></div>`);

define('stroke-form', `:host{display:block;height:363px;padding:12px 11px 0}
.row{display:flex;align-items:center;height:38px;margin-bottom:14px}
.lab{width:125px;text-align:right;margin-right:9px;white-space:nowrap;padding-top:2px;font-size:21px}
.combo{display:flex;width:183px;height:37px;border:2px solid #262626;background:#565656}
.step{width:28px;display:flex;flex-direction:column}.step button{flex:1;width:28px}
.step button+button{border-top:2px solid #2c2c2c}
.combo input{flex:1;min-width:0;background:#a2a2a2;color:#0c0c0c;padding:0 8px 3px;border:solid #262626;border-width:0 2px}
.dd{width:28px}
ui-field{margin-left:16px}.x{margin-left:10px;padding-top:2px}
hr{width:460px;height:3px;margin:0 0 13px;border:0;background:#303030;border-bottom:1px solid #5a5a5a}
.dl{width:458px;justify-content:space-between}
.dl label{display:flex;align-items:center;gap:8px}
input[type=checkbox]{appearance:none;width:23px;height:23px;margin-left:1px;border:2px solid #2c2c2c;background:#585858}
.dash{display:grid;grid-template-columns:repeat(6,72px);gap:4px;padding-left:1px}
.dash label{display:flex;flex-direction:column;align-items:center;color:#838383;line-height:32px}
.dash input{width:72px;height:37px;border:2px solid #363636;background:#767676;color:#222}`,
  `<div class="row"><label class="lab" for="w">Weight:</label><span class="combo"><span class="step"><button aria-label="Increase"><ui-icon name="stepUp"></ui-icon></button><button aria-label="Decrease"><ui-icon name="stepDown"></ui-icon></button></span><input id="w" value="1 pt"><button class="dd" aria-label="Weights"><ui-icon name="down"></ui-icon></button></span></div>
<div class="row"><span class="lab">Cap:</span><ui-segments icons="*capButt capRound capSquare"></ui-segments></div>
<div class="row"><span class="lab">Corner:</span><ui-segments icons="*joinMiter joinRound joinBevel"></ui-segments><ui-field label="Limit:" value="10" style="--w:82px;--lw:56px"></ui-field><span class="x">x</span></div>
<div class="row"><span class="lab">Align Stroke:</span><ui-segments icons="*alCenter alInside alOutside"></ui-segments></div>
<hr><div class="row dl"><label><input type="checkbox">Dashed Line</label><ui-segments icons="dashKeep dashFit" style="--bw:78px"></ui-segments></div>
<div class="dash">${['dash', 'gap', 'dash', 'gap', 'dash', 'gap'].map(t => `<label><input disabled>${t}</label>`).join('')}</div>`);

define('layer-list', `:host{flex:1;display:flex;flex-direction:column;min-height:0;padding:10px 11px 0 10px}
ul{flex:1;margin:0;padding:0;list-style:none;border:2px solid #343434;border-top-color:#2a2c3a}
li{display:flex;align-items:center;height:43px;background:#5f6575;border-bottom:2px solid #2e3040}
li>*{border-right:2px solid #34384a;height:41px;display:flex;align-items:center;justify-content:center}
.e{width:41px}.l{width:42px}.c{width:12px;background:#4a86e8;border-left:2px solid #4a5064}
.n{flex:1;justify-content:flex-start;gap:11px;padding-left:42px;color:#f2f2f2}
.th{width:36px;height:36px;background:#fff;border:2px solid #111}
.t{width:38px;border:0}.p{flex:none;width:27px;border:0;align-items:flex-start;justify-content:flex-end}
footer{display:flex;align-items:center;height:38px;gap:27px;padding-right:42px}
footer span{flex:1}.dim{color:#6c6c6c}`,
  `<ul><li><button class="e" aria-label="Visibility"><ui-icon name="eye"></ui-icon></button><span class="l"></span><span class="c"></span><span class="n"><i class="th"></i>Layer 1</span><button class="t" aria-label="Target"><ui-icon name="target"></ui-icon></button><span class="p"><svg width="10" height="10"><path d="M0 0h10v10z" fill="#dedede"/></svg></span></li></ul>
<footer><span>1 Layer</span><button class="dim" aria-label="Locate"><ui-icon name="find"></ui-icon></button><button class="dim" aria-label="Mask"><ui-icon name="mask"></ui-icon></button><button aria-label="New sublayer"><ui-icon name="sublayer"></ui-icon></button><button aria-label="New layer"><ui-icon name="newpage"></ui-icon></button><button class="dim" aria-label="Delete"><ui-icon name="trash"></ui-icon></button></footer>`);

define('panel-column', `:host{display:flex;flex-direction:column;width:620px;flex:none;min-height:0}
.head{height:24px;background:linear-gradient(#262626,#2e2e2e);display:flex;align-items:center;justify-content:flex-end;padding-right:10px}
.layers{flex:1;min-height:0}
.foot{display:flex;justify-content:center;height:14px;padding-top:3px;background:#484848;border:solid #242424;border-width:0 3px 1px 2px}`,
  `<div class="head"><ui-icon name="expand"></ui-icon></div>
<ui-panel tabs="*Color^"><color-ramp></color-ramp></ui-panel>
<ui-panel tabs="Brushes *Stroke^ Symbols"><stroke-form></stroke-form></ui-panel>
<ui-panel class="layers" tabs="*Layers"><layer-list></layer-list></ui-panel>
<div class="foot"><ui-icon name="grip"></ui-icon></div>`);

define('ai-app', `:host{display:flex;flex-direction:column;height:100vh}
main{flex:1;display:flex;min-height:0}`,
  `<app-bar></app-bar><control-bar></control-bar><main><tool-box></tool-box><doc-window></doc-window><dock-strip></dock-strip><panel-column></panel-column></main>`);
</script>
</body>
</html>
